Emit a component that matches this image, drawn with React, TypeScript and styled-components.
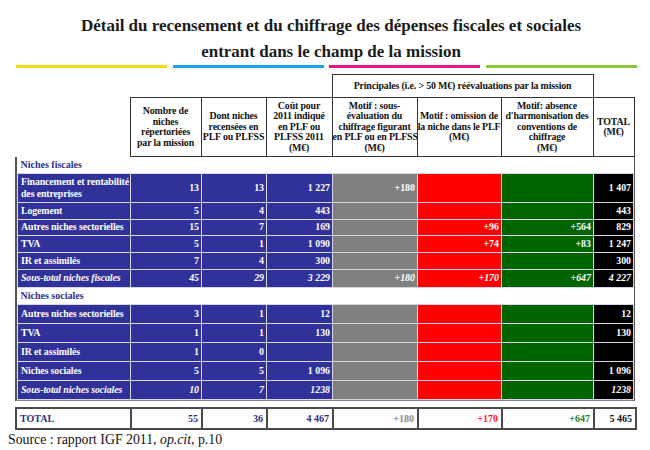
import React from "react";
import styled, { createGlobalStyle, css } from "styled-components";

const Global = createGlobalStyle`
  html, body { margin: 0; padding: 0; background: #ffffff; }
  body { font-family: "Liberation Serif", "Times New Roman", serif; }
  * { box-sizing: border-box; }
`;

const BLUE = "#31319a";
const NAVY = "#2e2e8c";
const GRAY = "#808080";
const RED = "#ff0000";
const GREEN = "#006400";
const BLACK = "#000000";
const SEP = "#d6d6e4";
const FRAME = "#555555";

const fills = [BLUE, BLUE, BLUE, BLUE, GRAY, RED, GREEN, BLACK];
const totalInks = [NAVY, NAVY, NAVY, NAVY, "#8a8a8a", "#ff1a1a", "#2f7a2f", "#111111"];

const headCols = [115, 71, 65, 66, 85, 84, 92, 41];
const bodyCols = [113, 71, 65, 66, 85, 84, 92, 40];

const Page = styled.div`
  width: 650px;
  height: 450px;
  padding-top: 13px;
  overflow: hidden;
`;

const Title = styled.h1`
  margin: 0;
  padding-left: 12px;
  font-family: "Liberation Serif", "Times New Roman", serif;
  font-weight: 700;
  font-size: 17px;
  line-height: 25.5px;
  text-align: center;
  color: #1b1b1b;
`;

const ColorRule = styled.div`
  display: flex;
  gap: 5.5px;
  margin: 0.5px 0 0 16px;
`;

const RuleSegment = styled.span<{ $color: string }>`
  display: block;
  width: 151px;
  height: 3px;
  background: ${(p) => p.$color};
`;

const TableZone = styled.div`
  margin-left: 15px;
  width: 620px;
`;

const HeadTable = styled.table`
  margin-top: 6.5px;
  width: 619px;
  table-layout: fixed;
  border-collapse: collapse;
`;

const HeadCell = styled.th<{ $boxed?: boolean }>`
  padding: 0;
  font-weight: 700;
  font-size: 9.9px;
  letter-spacing: -0.15px;
  line-height: 10.5px;
  color: #111;
  text-align: center;
  vertical-align: middle;
  white-space: nowrap;
  ${(p) =>
    p.$boxed &&
    css`
      border: 1.5px solid #333;
    `}
`;

const HeadRow = styled.tr<{ $h: number }>`
  height: ${(p) => p.$h}px;
`;

const BodyFrame = styled.div`
  border-left: 2px solid ${FRAME};
  border-right: 2px solid ${FRAME};
  border-bottom: 1px solid #8080a8;
`;

const BodyTable = styled.table`
  width: 100%;
  table-layout: fixed;
  border-collapse: collapse;
`;

const Row = styled.tr<{ $h: number }>`
  height: ${(p) => p.$h}px;
`;

const SectionCell = styled.td`
  padding: 0 3px;
  background: #ffffff;
  color: ${NAVY};
  font-weight: 700;
  font-size: 10px;
  line-height: 11px;
  text-align: left;
  vertical-align: middle;
`;

const DataCell = styled.td<{ $fill: string; $label?: boolean; $italic?: boolean }>`
  padding: ${(p) => (p.$label ? "0 1px 0 3px" : "0 2px")};
  background: ${(p) => p.$fill};
  color: #ffffff;
  font-weight: 700;
  font-size: 9.9px;
  letter-spacing: ${(p) => (p.$label ? "-0.12px" : "0")};
  line-height: 12px;
  font-style: ${(p) => (p.$italic ? "italic" : "normal")};
  text-align: ${(p) => (p.$label ? "left" : "right")};
  vertical-align: middle;
  border: 1px solid ${SEP};
  white-space: nowrap;
  overflow: hidden;
`;

const TotalTable = styled.table`
  margin-top: 6px;
  width: 620px;
  table-layout: fixed;
  border-collapse: collapse;
`;

const TotalCell = styled.td<{ $ink: string; $label?: boolean }>`
  padding: 0 3px;
  border: 2px solid #4a4a4a;
  background: #ffffff;
  color: ${(p) => p.$ink};
  font-weight: 700;
  font-size: 10px;
  line-height: 11px;
  text-align: ${(p) => (p.$label ? "left" : "right")};
  vertical-align: middle;
`;

const Source = styled.p`
  margin: 2px 0 0 8px;
  font-family: "Liberation Serif", "Times New Roman", serif;
  font-size: 13.8px;
  line-height: 16px;
  color: #111;
`;

const Cols = ({ widths }: { widths: number[] }) => (
  <colgroup>
    {widths.map((w, i) => (
      <col key={i} style={{ width: w }} />
    ))}
  </colgroup>
);

const Lines = ({ lines }: { lines: string[] }) => (
  <>
    {lines.map((l, i) => (
      <React.Fragment key={i}>
        {i > 0 && <br />}
        {l}
      </React.Fragment>
    ))}
  </>
);

const headers: string[][] = [
  ["Nombre de", "niches", "répertoriées", "par la mission"],
  ["Dont niches", "recensées en", "PLF ou PLFSS"],
  ["Coût pour", "2011 indiqué", "en PLF ou", "PLFSS 2011", "(M€)"],
  ["Motif : sous-", "évaluation du", "chiffrage figurant", "en PLF ou en PLFSS", "(M€)"],
  ["Motif : omission de", "la niche dans le PLF", "(M€)"],
  ["Motif: absence", "d'harmonisation des", "conventions de", "chiffrage", "(M€)"],
  ["TOTAL", "(M€)"],
];

type DataRow = { cells: string[][]; h: number; sub?: boolean };

const r = (...c: (string | string[])[]) => c.map((x) => (Array.isArray(x) ? x : [x]));

const fiscales: DataRow[] = [
  { cells: r(["Financement et rentabilité", "des entreprises"], "13", "13", "1 227", "+180", "", "", "1 407"), h: 29 },
  { cells: r("Logement", "5", "4", "443", "", "", "", "443"), h: 17 },
  { cells: r("Autres niches sectorielles", "15", "7", "169", "", "+96", "+564", "829"), h: 16.5 },
  { cells: r("TVA", "5", "1", "1 090", "", "+74", "+83", "1 247"), h: 17 },
  { cells: r("IR et assimilés", "7", "4", "300", "", "", "", "300"), h: 17 },
  { cells: r("Sous-total niches fiscales", "45", "29", "3 229", "+180", "+170", "+647", "4 227"), h: 17.5, sub: true },
];

const sociales: DataRow[] = [
  { cells: r("Autres niches sectorielles", "3", "1", "12", "", "", "", "12"), h: 18.7 },
  { cells: r("TVA", "1", "1", "130", "", "", "", "130"), h: 19.2 },
  { cells: r("IR et assimilés", "1", "0", "", "", "", "", ""), h: 19.2 },
  { cells: r("Niches sociales", "5", "5", "1 096", "", "", "", "1 096"), h: 18.8 },
  { cells: r("Sous-total niches sociales", "10", "7", "1238", "", "", "", "1238"), h: 18.8, sub: true },
];

const total = ["TOTAL", "55", "36", "4 467", "+180", "+170", "+647", "5 465"];

const DataRows = ({ rows }: { rows: DataRow[] }) => (
  <>
    {rows.map((row, i) => (
      <Row key={i} $h={row.h}>
        {row.cells.map((c, j) => (
          <DataCell key={j} $fill={fills[j]} $label={j === 0} $italic={row.sub}>
            <Lines lines={c} />
          </DataCell>
        ))}
      </Row>
    ))}
  </>
);

export default function App() {
  return (
    <Page>
      <Global />
      <Title>
        Détail du recensement et du chiffrage des dépenses fiscales et sociales
        <br />
        entrant dans le champ de la mission
      </Title>
      <ColorRule>
        <RuleSegment $color="#f0dc14" />
        <RuleSegment $color="#1aa3e6" />
        <RuleSegment $color="#e8157f" />
        <RuleSegment $color="#8cc63e" />
      </ColorRule>
      <TableZone>
        <HeadTable>
          <Cols widths={headCols} />
          <thead>
            <HeadRow $h={23}>
              <HeadCell colSpan={4} />
              <HeadCell colSpan={3} $boxed>
                Principales (i.e. &gt; 50 M€) réévaluations par la mission
              </HeadCell>
              <HeadCell />
            </HeadRow>
            <HeadRow $h={59}>
              <HeadCell />
              {headers.map((h, i) => (
                <HeadCell key={i} $boxed>
                  <Lines lines={h} />
                </HeadCell>
              ))}
            </HeadRow>
          </thead>
        </HeadTable>
        <BodyFrame>
          <BodyTable>
            <Cols widths={bodyCols} />
            <tbody>
              <Row $h={16}>
                <SectionCell colSpan={8}>Niches fiscales</SectionCell>
              </Row>
              <DataRows rows={fiscales} />
              <Row $h={17.5}>
                <SectionCell colSpan={8}>Niches sociales</SectionCell>
              </Row>
              <DataRows rows={sociales} />
            </tbody>
          </BodyTable>
        </BodyFrame>
        <TotalTable>
          <Cols widths={headCols.map((w, i) => (i === 7 ? 42 : w))} />
          <tbody>
            <Row $h={21}>
              {total.map((t, i) => (
                <TotalCell key={i} $ink={totalInks[i]} $label={i === 0}>
                  {t}
                </TotalCell>
              ))}
            </Row>
          </tbody>
        </TotalTable>
      </TableZone>
      <Source>
        Source : rapport IGF 2011, <i>op.cit</i>, p.10
      </Source>
    </Page>
  );
}
